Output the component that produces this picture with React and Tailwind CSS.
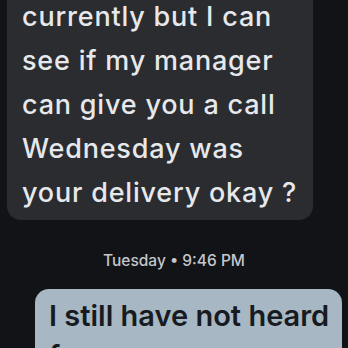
export default function App() {
  return (
    <div className="w-[348px] h-[348px] overflow-hidden bg-[#111317] flex flex-col font-['Inter',sans-serif]">
      <div className="ml-[7px] w-[306px] -mt-[5px] pl-[15px] pb-[5px] rounded-b-[14px] bg-[#2a2c30] text-[#e6e8ec] text-[27px] leading-[44px] tracking-[0.8px] font-medium">
        <p>currently but I can</p>
        <p>see if my manager</p>
        <p>can give you a call</p>
        <p>Wednesday was</p>
        <p>your delivery okay ?</p>
      </div>
      <div className="mt-[31px] text-center text-[15.5px] leading-[20px] font-medium text-[#c4c7cc]">
        Tuesday • 9:46 PM
      </div>
      <div className="mt-[18px] ml-[35px] w-[307px] pt-[7px] pl-[14px] rounded-[14px] bg-[#a7b7c3] text-[#171b21] text-[29px] leading-[40px] font-semibold whitespace-nowrap">
        <p>I still have not heard</p>
        <p>from anyone</p>
      </div>
    </div>
  );
}
